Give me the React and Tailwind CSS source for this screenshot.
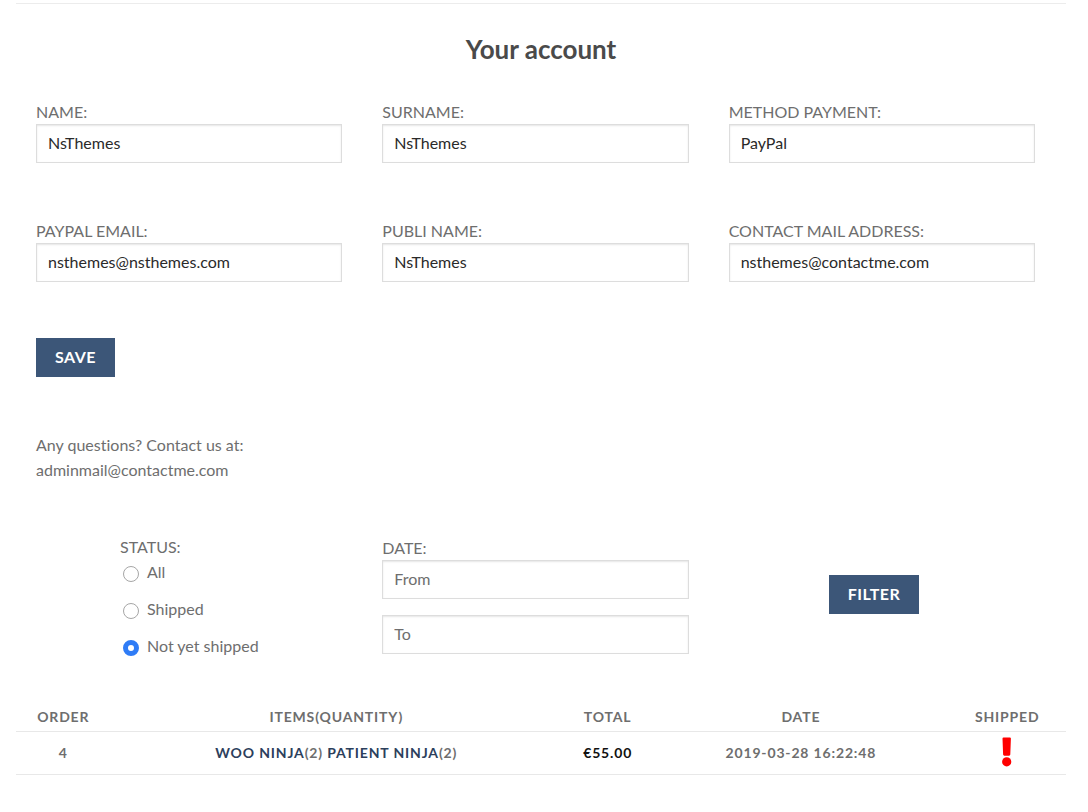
const inputCls =
  "block h-[39px] w-full border border-[#dddddd] bg-white px-[11px] pb-[2px] text-base text-[#2a2a2a] shadow-[inset_0_1px_2px_rgba(0,0,0,0.1)] outline-none placeholder:text-[#6e6e6e]";
const buttonCls =
  "h-[39px] bg-[#3c5678] px-[19px] pb-[2px] text-base font-bold tracking-[0.03em] text-white uppercase";

function Field({ id, label, value }) {
  return (
    <div>
      <label htmlFor={id} className="block text-base leading-6 uppercase">{label}</label>
      <input id={id} type="text" defaultValue={value} className={inputCls} />
    </div>
  );
}

function Status({ label, checked }) {
  return (
    <label className="flex h-[37px] items-start gap-2 pl-[3px] leading-[26px]">
      <input
        type="radio"
        name="status"
        defaultChecked={checked}
        className="mt-[7px] size-4 appearance-none rounded-full border border-[#a6a6a6] bg-white checked:border-[5px] checked:border-[#2f7cf6]"
      />
      {label}
    </label>
  );
}

const th = "border-b border-[#e8e8e8] pt-[6px] pb-[6px] leading-4 font-bold uppercase tracking-[0.06em]";
const td = "border-b border-[#e8e8e8] h-[43px] p-0 tracking-[0.06em] font-bold";

export default function App() {
  return (
    <main className="bg-white px-4 pt-[3px] font-['Lato',sans-serif] text-base text-[#6e6e6e] [font-variant-ligatures:none]">
      <div className="mr-[6px] border-t border-[#ececec]">
        <h1 className="pt-7 text-center text-[26px] leading-[34px] font-bold text-[#4a4a4a]">Your account</h1>
        <div className="pr-[31px] pl-5">
          <form className="pt-[34px]" onSubmit={(e) => e.preventDefault()}>
            <div className="grid grid-cols-3 gap-x-10 gap-y-14">
              <Field id="name" label="Name:" value="NsThemes" />
              <Field id="surname" label="Surname:" value="NsThemes" />
              <Field id="method" label="Method payment:" value="PayPal" />
              <Field id="paypal" label="Paypal email:" value="nsthemes@nsthemes.com" />
              <Field id="publi" label="Publi name:" value="NsThemes" />
              <Field id="contact" label="Contact mail address:" value="nsthemes@contactme.com" />
            </div>
            <button type="submit" className={"mt-14 " + buttonCls}>Save</button>
          </form>
          <p className="mt-[55px] leading-[25px]">
            Any questions? Contact us at:
            <br />
            adminmail@contactme.com
          </p>
          <form className="mt-[53px] grid grid-cols-3 gap-x-10" onSubmit={(e) => e.preventDefault()}>
            <fieldset className="pl-[84px]">
              <legend className="leading-6">STATUS:</legend>
              <Status label="All" />
              <Status label="Shipped" />
              <Status label="Not yet shipped" checked />
            </fieldset>
            <div className="pt-px">
              <label htmlFor="from" className="block leading-6">DATE:</label>
              <input id="from" type="text" placeholder="From" className={inputCls} />
              <input id="to" type="text" placeholder="To" aria-label="To" className={"mt-4 " + inputCls} />
            </div>
            <div className="pt-10 pl-[100px]">
              <button type="submit" className={buttonCls}>Filter</button>
            </div>
          </form>
        </div>
        <table className="mt-[33px] w-full table-fixed border-collapse text-center text-sm">
          <colgroup>
            <col className="w-[9%]" />
            <col className="w-[43%]" />
            <col className="w-[8.7%]" />
            <col className="w-[28.1%]" />
            <col className="w-[11.2%]" />
          </colgroup>
          <thead>
            <tr>
              <th className={th}>Order</th>
              <th className={th}>Items(quantity)</th>
              <th className={th}>Total</th>
              <th className={th}>Date</th>
              <th className={th}>Shipped</th>
            </tr>
          </thead>
          <tbody>
            <tr>
              <td className={td}>4</td>
              <td className={td}>
                <a href="#woo-ninja" className="text-[#2c405c]">WOO NINJA</a>(2){" "}
                <a href="#patient-ninja" className="text-[#2c405c]">PATIENT NINJA</a>(2)
              </td>
              <td className={td + " text-[#111111]"}>€55.00</td>
              <td className={td}>2019-03-28 16:22:48</td>
              <td className={td}>
                <svg role="img" aria-label="Not shipped" viewBox="0 0 12 32" className="mx-auto h-8 w-3" fill="#ff0000">
                  <path d="M2.5 .6h6.4q1 0 1 1l-.6 16q-.1 1.1-1.2 1.1H3.3q-1.1 0-1.2-1.1l-.6-16q0-1 1-1Z" />
                  <circle cx="5.7" cy="24.8" r="4.6" />
                </svg>
              </td>
            </tr>
          </tbody>
        </table>
      </div>
    </main>
  );
}
